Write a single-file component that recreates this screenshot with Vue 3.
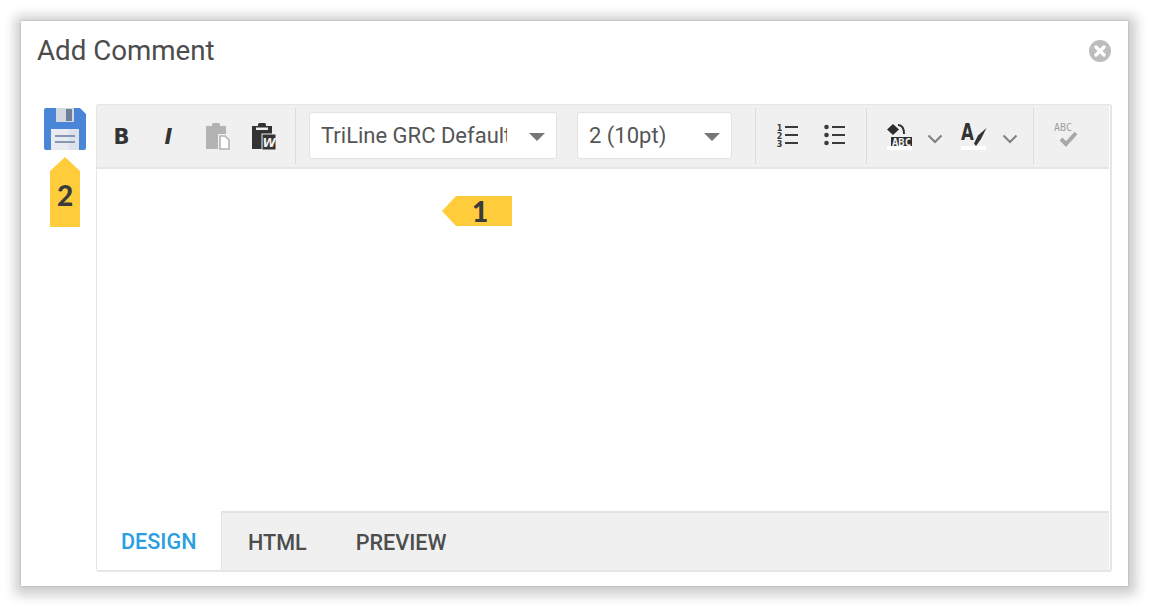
<script setup>
const tabs = [
  { label: "DESIGN", active: true },
  { label: "HTML" },
  { label: "PREVIEW" },
];
</script>

<template>
  <div class="page">
    <div class="dialog">
      <header class="dialog-head">
        <h1 class="dialog-title">Add Comment</h1>
        <svg class="close" width="24" height="24" viewBox="0 0 24 24">
          <circle cx="12" cy="12" r="11" fill="#bdbdbd" />
          <path d="M8 8l8 8M16 8l-8 8" stroke="#fff" stroke-width="3.4" stroke-linecap="round" />
        </svg>
      </header>

      <div class="dialog-body">
        <aside class="side">
          <svg class="save" width="42" height="42" viewBox="0 0 42 42">
            <path d="M2 0h34l6 6v34a2 2 0 0 1-2 2H2a2 2 0 0 1-2-2V2a2 2 0 0 1 2-2z" fill="#4a86d8" />
            <rect x="12" y="0" width="18" height="14" fill="#d3d7e0" />
            <rect x="22" y="1" width="6" height="12" fill="#6d7f99" />
            <rect x="7" y="21" width="28" height="21" fill="#e8ebf2" />
            <rect x="25" y="21" width="10" height="21" fill="#dde1ea" />
            <rect x="11" y="27" width="20" height="2" fill="#8797b3" />
            <rect x="11" y="33" width="20" height="2" fill="#8797b3" />
          </svg>
          <div class="badge badge-up">2</div>
        </aside>

        <section class="editor">
          <div class="toolbar">
            <div class="group group-format">
              <span class="btn glyph-b">B</span>
              <span class="btn glyph-i">I</span>
              <span class="btn">
                <svg class="nudge-paste" width="24" height="27" viewBox="0 0 24 27">
                  <path d="M0 3h6V1.500A1.500 1.500 0 0 1 7.500 0h5A1.500 1.500 0 0 1 14 1.500V3h6v8h-8v15H0z" fill="#b3b3b3" />
                  <path d="M14 13h5l4 4v9h-9z" fill="#fff" stroke="#b3b3b3" stroke-width="1.600" />
                </svg>
              </span>
              <span class="btn">
                <svg class="nudge-word" width="24" height="27" viewBox="0 0 24 27">
                  <path d="M0 3h6V1.500A1.500 1.500 0 0 1 7.500 0h5A1.500 1.500 0 0 1 14 1.500V3h6v8h-8v15H0z" fill="#333" />
                  <rect x="4" y="4.500" width="12" height="2.500" fill="#f0f0f0" />
                  <rect x="10" y="11" width="14" height="16" fill="#333" stroke="#f0f0f0" stroke-width="1" />
                  <text x="17" y="23.500" text-anchor="middle" class="svg-w">W</text>
                </svg>
              </span>
            </div>

            <div class="group group-selects">
              <div class="select select-font">
                <span class="select-text">TriLine GRC Default</span>
                <i class="caret"></i>
              </div>
              <div class="select select-size">
                <span class="select-text">2 (10pt)</span>
                <i class="caret"></i>
              </div>
            </div>

            <div class="group group-lists">
              <span class="btn">
                <svg class="icon-open" width="24" height="24" viewBox="0 0 24 24">
                  <text x="3.500" y="6.500" text-anchor="middle" class="svg-num">1</text>
                  <text x="3.500" y="14.500" text-anchor="middle" class="svg-num">2</text>
                  <text x="3.500" y="22.500" text-anchor="middle" class="svg-num">3</text>
                  <path d="M9 3h13M9 11h13M9 19h13" stroke="#3a3a3a" stroke-width="1.800" />
                </svg>
              </span>
              <span class="btn">
                <svg width="24" height="24" viewBox="0 0 24 24">
                  <circle cx="3.500" cy="3" r="2.300" fill="#3a3a3a" />
                  <circle cx="3.500" cy="11" r="2.300" fill="#3a3a3a" />
                  <circle cx="3.500" cy="19" r="2.300" fill="#3a3a3a" />
                  <path d="M9 3h13M9 11h13M9 19h13" stroke="#3a3a3a" stroke-width="1.800" />
                </svg>
              </span>
            </div>

            <div class="group group-colors">
              <span class="btn btn-color">
                <svg width="26" height="28" viewBox="0 0 26 28">
                  <path d="M0 7.500L6 2l6 5.500L6 13z" fill="#2e2e2e" />
                  <path d="M11 3c4 0 6 3 6 9" fill="none" stroke="#2e2e2e" stroke-width="2" />
                  <rect x="4" y="15" width="21" height="10" fill="#2e2e2e" />
                  <text x="14.500" y="23.500" text-anchor="middle" class="svg-abc-light">ABC</text>
                  <rect x="0" y="24" width="25" height="4" fill="#fff" />
                </svg>
              </span>
              <span class="chev">
                <svg width="16" height="10" viewBox="0 0 16 10"><path d="M1.500 1.500L8 8l6.500-6.500" fill="none" stroke="#808080" stroke-width="2" /></svg>
              </span>
              <span class="btn btn-color">
                <svg class="icon-open" width="26" height="28" viewBox="0 0 26 28">
                  <text x="0" y="17.500" transform="scale(0.72 1)" class="svg-a">A</text>
                  <path d="M25.500 6L17 13.500l-4 8 2 2.500 5-7z" fill="#333" />
                  <rect x="0" y="24" width="25" height="4" fill="#fff" />
                </svg>
              </span>
              <span class="chev">
                <svg width="16" height="10" viewBox="0 0 16 10"><path d="M1.500 1.500L8 8l6.500-6.500" fill="none" stroke="#808080" stroke-width="2" /></svg>
              </span>
            </div>

            <div class="group group-spell">
              <span class="btn">
                <svg width="26" height="26" viewBox="0 0 26 26">
                  <text x="0" y="8" class="svg-abc-gray">ABC</text>
                  <path d="M7 16l5 5 10-11" fill="none" stroke="#a9a9a9" stroke-width="4" />
                </svg>
              </span>
            </div>
          </div>

          <div class="content">
            <div class="badge badge-left">1</div>
          </div>

          <div class="tabs">
            <span v-for="tab in tabs" :key="tab.label" class="tab" :class="{ active: tab.active }">{{ tab.label }}</span>
            <span class="tabs-rest"></span>
          </div>
        </section>
      </div>
    </div>
  </div>
</template>

<style>
html, body {
  margin: 0;
  background: #fff;
}
</style>

<style scoped>
.page {
  padding: 21px;
  width: 1107px;
  height: 565px;
  font-family: Roboto, "Liberation Sans", sans-serif;
}
.dialog {
  width: 1107px;
  height: 565px;
  background: #fff;
  box-shadow: 0 0 2px rgba(0, 0, 0, 0.2), 1px 2px 11px 7px rgba(0, 0, 0, 0.2);
  display: flex;
  flex-direction: column;
}
.dialog-head {
  height: 83px;
  flex: none;
  display: flex;
  justify-content: space-between;
  padding: 0 16px 0 16px;
}
.dialog-title {
  margin: 13px 0 0;
  font-size: 27.700px;
  line-height: 34px;
  font-weight: 400;
  color: #4c4c4c;
}
.close {
  margin-top: 18px;
}
.dialog-body {
  display: flex;
  flex: 1;
  min-height: 0;
  padding: 0 16px 14px 23px;
}
.side {
  width: 52px;
  flex: none;
  position: relative;
}
.save {
  display: block;
  margin-top: 4px;
}
.badge {
  position: absolute;
  background: #ffcd3c;
  color: #3b3b3b;
  font-family: Lato, "DejaVu Sans", sans-serif;
  font-weight: 900;
  font-size: 28px;
  display: flex;
  align-items: center;
  justify-content: center;
}
.badge-up {
  left: 6px;
  top: 53px;
  width: 30px;
  height: 70px;
  padding-top: 6px;
  box-sizing: border-box;
  clip-path: polygon(50% 0, 100% 20%, 100% 100%, 0 100%, 0 20%);
}
.badge-left {
  left: 345px;
  top: 27px;
  width: 70px;
  height: 30px;
  padding-left: 6px;
  box-sizing: border-box;
  clip-path: polygon(0 50%, 20% 0, 100% 0, 100% 100%, 20% 100%);
}
.editor {
  flex: 1;
  min-width: 0;
  display: flex;
  flex-direction: column;
  border: 1px solid #e6e6e6;
  border-width: 1px 2px 2px 1px;
  border-radius: 3px;
}
.toolbar {
  flex: none;
  display: flex;
  align-items: center;
  background: #f0f0f0;
  border-bottom: 2px solid #e6e6e6;
  box-sizing: border-box;
  height: 64px;
  margin-right: 1px;
}
.group {
  height: 56px;
  display: flex;
  align-items: center;
  box-sizing: border-box;
  border-right: 1px solid #dcdcdc;
}
.group-format {
  padding: 0 8px 0 1px;
  width: 199px;
}
.group-selects {
  padding: 0 0 1px 13px;
  gap: 20px;
  width: 460px;
}
.group-lists {
  padding-left: 8px;
  width: 111px;
}
.group-colors {
  padding-left: 10px;
  width: 167px;
}
.group-spell {
  padding-left: 9px;
  border-right: 0;
}
.btn {
  width: 47px;
  height: 40px;
  flex: none;
  display: flex;
  align-items: center;
  justify-content: center;
  color: #333;
}
.btn-color {
  width: 46px;
}
.icon-open {
  overflow: visible;
}
.nudge-paste {
  margin-left: 4px;
}
.nudge-word {
  margin-left: 2px;
}
.chev {
  width: 24px;
  flex: none;
  display: flex;
  justify-content: center;
  padding-top: 6px;
}
.chev + .btn-color {
  margin-left: 4px;
}
.btn-color + .chev + .btn-color + .chev {
  margin-left: 1px;
}
.glyph-b, .glyph-i {
  font-family: "DejaVu Sans", sans-serif;
  font-weight: 700;
  font-size: 21px;
  padding-top: 1px;
  box-sizing: border-box;
}
.glyph-i {
  font-style: italic;
}
.select {
  height: 47px;
  flex: none;
  background: #fff;
  border: 1px solid #e2e2e2;
  border-radius: 3px;
  box-sizing: border-box;
  display: flex;
  align-items: center;
  padding-left: 11px;
  position: relative;
  font-size: 22px;
  color: #555;
}
.select-font {
  width: 248px;
}
.select-size {
  width: 155px;
}
.select-text {
  display: block;
  width: 186px;
  overflow: hidden;
  white-space: nowrap;
}
.caret {
  position: absolute;
  right: 11px;
  top: 20px;
  width: 0;
  height: 0;
  border: 8px solid transparent;
  border-top: 8px solid #777;
  border-bottom: 0;
}
.content {
  flex: 1;
  position: relative;
  background: #fff;
}
.tabs {
  height: 59px;
  flex: none;
  display: flex;
  font-size: 21.600px;
  font-weight: 500;
  color: #4d4d4d;
  margin-right: 1px;
}
.tab {
  display: flex;
  align-items: center;
  background: #f0f0f0;
  border-top: 2px solid #e3e3e3;
  padding-left: 26px;
  padding-right: 23px;
  box-sizing: border-box;
  padding-top: 2px;
}
.tab.active {
  width: 125px;
  flex: none;
  background: #fff;
  border-top: 0;
  border-right: 1px solid #e6e6e6;
  color: #2a9fdf;
  padding: 1px 0 0 24px;
}
.tabs-rest {
  flex: 1;
  background: #f0f0f0;
  border-top: 2px solid #e3e3e3;
}
.svg-w {
  font: italic 700 12px "DejaVu Sans", sans-serif;
  fill: #f0f0f0;
}
.svg-num {
  font: 700 8px "DejaVu Sans", sans-serif;
  fill: #3a3a3a;
}
.svg-abc-light {
  font: 700 10.500px "DejaVu Sans Mono", monospace;
  fill: #f0f0f0;
}
.svg-abc-gray {
  font: 400 10px "DejaVu Sans Mono", monospace;
  fill: #a0a0a0;
}
.svg-a {
  font: 700 23px "DejaVu Sans", sans-serif;
  fill: #333;
}
</style>
